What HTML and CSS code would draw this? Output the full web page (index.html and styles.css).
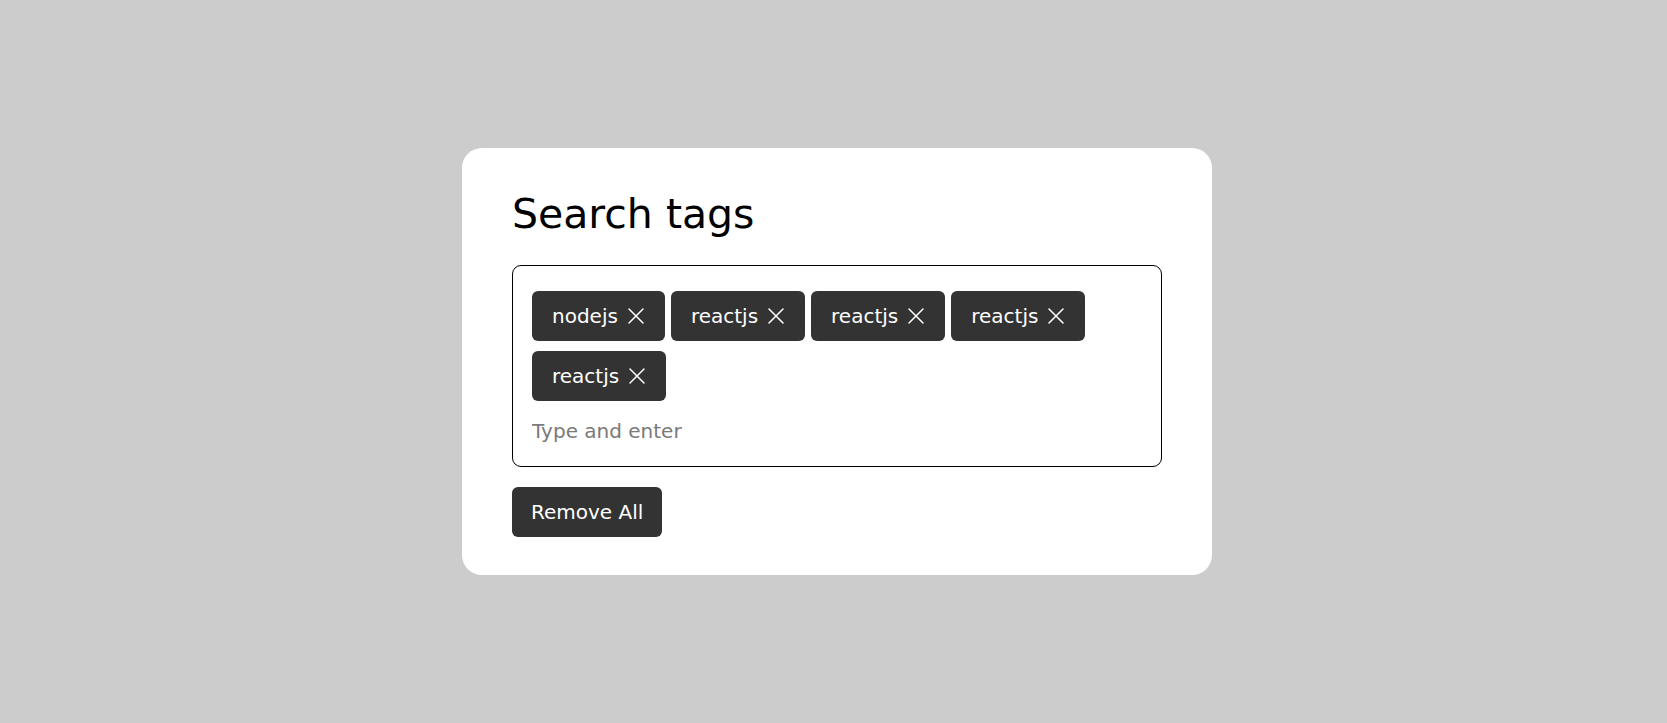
FILE: index.html
```html
<!DOCTYPE html>
<html lang="en">
<head>
<meta charset="utf-8">
<title>Search tags</title>
<link rel="stylesheet" href="styles.css">
</head>
<body>
<div class="page">
  <div class="card">
    <h1 class="title">Search tags</h1>
    <div class="tag-box">
      <ul class="tags">
        <li class="tag"><span class="tag-text">nodejs</span><svg class="tag-x" viewBox="0 0 18 18" width="18" height="18"><path d="M2 2L16 16M16 2L2 16" fill="none" stroke="#fff" stroke-width="1.5" stroke-linecap="round"/></svg></li>
        <li class="tag"><span class="tag-text">reactjs</span><svg class="tag-x" viewBox="0 0 18 18" width="18" height="18"><path d="M2 2L16 16M16 2L2 16" fill="none" stroke="#fff" stroke-width="1.5" stroke-linecap="round"/></svg></li>
        <li class="tag"><span class="tag-text">reactjs</span><svg class="tag-x" viewBox="0 0 18 18" width="18" height="18"><path d="M2 2L16 16M16 2L2 16" fill="none" stroke="#fff" stroke-width="1.5" stroke-linecap="round"/></svg></li>
        <li class="tag"><span class="tag-text">reactjs</span><svg class="tag-x" viewBox="0 0 18 18" width="18" height="18"><path d="M2 2L16 16M16 2L2 16" fill="none" stroke="#fff" stroke-width="1.5" stroke-linecap="round"/></svg></li>
        <li class="tag"><span class="tag-text">reactjs</span><svg class="tag-x" viewBox="0 0 18 18" width="18" height="18"><path d="M2 2L16 16M16 2L2 16" fill="none" stroke="#fff" stroke-width="1.5" stroke-linecap="round"/></svg></li>
      </ul>
      <input class="tag-input" type="text" placeholder="Type and enter">
    </div>
    <button class="remove-btn" type="button">Remove All</button>
  </div>
</div>
</body>
</html>
```

FILE: styles.css
```css
* {
  box-sizing: border-box;
}

html, body {
  margin: 0;
  padding: 0;
  height: 100%;
}

body {
  background: #cccccc;
  font-family: "DejaVu Sans", "Open Sans", sans-serif;
}

.page {
  height: 100%;
  display: flex;
  align-items: center;
  justify-content: center;
  padding-left: 7px;
}

.card {
  width: 750px;
  height: 427px;
  background: #ffffff;
  border-radius: 20px;
  padding: 42px 50px 38px;
  display: flex;
  flex-direction: column;
}

.title {
  margin: 0 0 27px;
  font-size: 41px;
  line-height: 48px;
  font-weight: normal;
  color: #000000;
}

.tag-box {
  width: 650px;
  height: 202px;
  border: 1px solid #000000;
  border-radius: 9px;
  padding: 25px 19px 15px;
  display: flex;
  flex-direction: column;
}

.tags {
  list-style: none;
  margin: 0;
  padding: 0;
  display: flex;
  flex-wrap: wrap;
  gap: 10px 6px;
}

.tag {
  height: 50px;
  background: #333333;
  color: #ffffff;
  border-radius: 6px;
  padding: 0 20px 0 20px;
  display: flex;
  align-items: center;
  gap: 9px;
  font-size: 20px;
}

.tag-text {
  line-height: 1;
  padding-bottom: 1px;
}

.tag-x {
  display: block;
  width: 18px;
  height: 18px;
}

.tag-input {
  margin-top: 10px;
  height: 40px;
  border: none;
  outline: none;
  padding: 0;
  font-family: inherit;
  font-size: 20px;
  color: #333333;
  background: transparent;
}

.tag-input::placeholder {
  color: #7a7a7a;
}

.remove-btn {
  margin-top: 20px;
  align-self: flex-start;
  height: 50px;
  padding: 0 19px;
  background: #333333;
  color: #ffffff;
  border: none;
  border-radius: 6px;
  font-family: inherit;
  font-size: 20px;
}
```
